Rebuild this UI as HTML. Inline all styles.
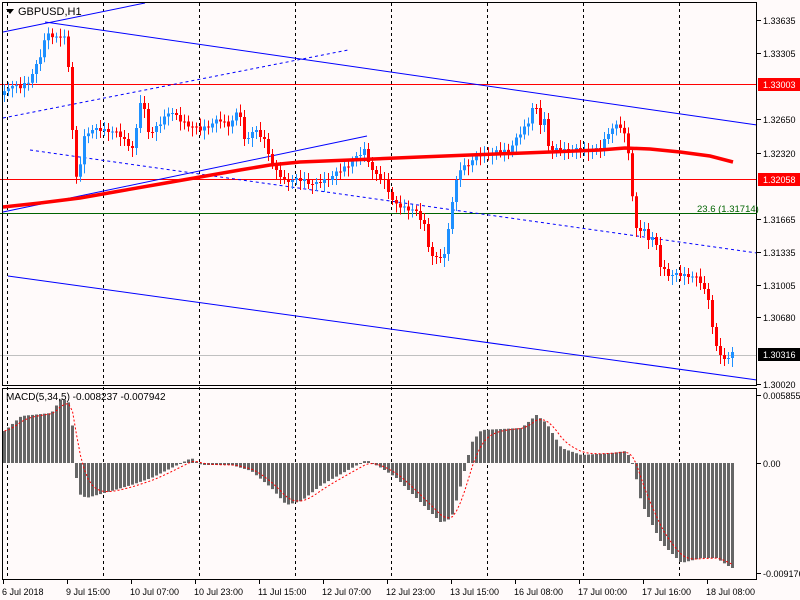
<!DOCTYPE html>
<html><head><meta charset="utf-8"><style>
body{margin:0;background:#fffafa;width:800px;height:600px;overflow:hidden;font-family:"Liberation Sans",sans-serif}
svg{position:absolute;left:0;top:0}
</style></head><body>
<svg id="s" width="800" height="600" xmlns="http://www.w3.org/2000/svg" font-family="Liberation Sans, sans-serif" font-size="10">
<rect width="800" height="600" fill="#fffafa"/>
<g id="grid" stroke="#000" stroke-dasharray="3,3" stroke-width="1"></g>
<line x1="0" y1="84.5" x2="757" y2="84.5" stroke="#f00"/>
<line x1="0" y1="179.5" x2="757" y2="179.5" stroke="#f00"/>
<line x1="0" y1="213.5" x2="757" y2="213.5" stroke="#006400"/>
<line x1="0" y1="355.5" x2="757" y2="355.5" stroke="#c0c0c0"/>
<line x1="3" y1="32" x2="145" y2="3" stroke="#00f"/>
<line x1="45" y1="22" x2="757" y2="125" stroke="#00f"/>
<line x1="3" y1="118" x2="348" y2="50" stroke="#00f" stroke-dasharray="3,3"/>
<line x1="3" y1="212" x2="367" y2="136" stroke="#00f"/>
<line x1="30" y1="150" x2="757" y2="253" stroke="#00f" stroke-dasharray="3,3"/>
<line x1="8" y1="276" x2="757" y2="380" stroke="#00f"/>
<g id="candles"></g>
<polyline points="3,207 40,203 80,198 120,191 160,184 200,177 240,170 270,165 300,162 350,160 420,157 470,155 550,152 600,150 625,148 650,149 680,152 710,156 733,162" fill="none" stroke="#f00" stroke-width="3.5"/>
<g id="macd" fill="#666"></g>
<polyline id="sig" fill="none" stroke="#f00" stroke-dasharray="2,2"/>
<rect x="2.5" y="2.5" width="754" height="383" fill="none" stroke="#000"/>
<rect x="2.5" y="388.5" width="754" height="191" fill="none" stroke="#000"/>
<path d="M6 9 h8 l-4 5z" fill="#000"/>
<text x="18" y="15" font-size="11" fill="#000">GBPUSD,H1</text>
<text x="6" y="400" fill="#000">MACD(5,34,5) -0.008237 -0.007942</text>
<text x="697" y="212" fill="#006400" font-size="9.5">23.6 (1.31714)</text>
<g id="ax" fill="#000" font-size="9"></g>
</svg>
<script>
var NS="http://www.w3.org/2000/svg";
function el(p,t,a){var e=document.createElementNS(NS,t);for(var k in a)e.setAttribute(k,a[k]);p.appendChild(e);return e;}
var g=document.getElementById('grid');
[7,103,199,295,391,487,583,679].forEach(function(x){el(g,'line',{x1:x+.5,y1:3,x2:x+.5,y2:580});});
var kp=[[3,95],[10,85],[20,88],[30,80],[40,60],[48,30],[55,40],[62,35],[68,40],[70,90],[73,130],[76,180],[80,175],[83,140],[90,130],[110,130],[120,135],[135,150],[140,100],[145,110],[150,135],[160,125],[170,110],[180,120],[200,130],[220,120],[230,125],[240,110],[245,140],[255,130],[265,140],[275,170],[285,180],[305,180],[315,185],[335,175],[355,160],[365,150],[375,175],[385,180],[395,205],[415,210],[425,225],[430,250],[435,260],[445,255],[450,220],[455,190],[460,170],[480,155],[510,150],[530,120],[535,100],[540,125],[545,120],[550,150],[600,150],[610,130],[620,125],[628,140],[632,185],[636,230],[645,230],[650,240],[655,235],[660,265],[670,275],[690,275],[700,280],[710,300],[715,345],[725,360],[733,352]];
function yAt(x){for(var i=1;i<kp.length;i++){if(x<=kp[i][0]){var a=kp[i-1],b=kp[i];return a[1]+(b[1]-a[1])*(x-a[0])/(b[0]-a[0]);}}return kp[kp.length-1][1];}
var c=document.getElementById('candles');var prev=yAt(3);
for(var x=3;x<=733;x+=4){var cl=yAt(x+2)+((x*7)%5-2);var op=prev;var up=cl<op;var col=up?'#1e90ff':'#f00';
var t=Math.min(op,cl),b=Math.max(op,cl);if(b-t<1)b=t+1;
el(c,'line',{x1:x+1.5,y1:t-4-(x%5),x2:x+1.5,y2:b+4+(x%6),stroke:col});
el(c,'rect',{x:x,y:t,width:3,height:b-t,fill:col});prev=cl;}
var mk=[[3,-32],[20,-47],[50,-50],[60,-65],[68,-60],[72,-30],[76,30],[85,35],[110,28],[130,22],[150,15],[170,5],[190,-5],[200,2],[230,2],[250,8],[270,25],[285,42],[300,38],[320,22],[345,8],[365,-3],[380,5],[395,15],[420,40],[440,60],[450,55],[460,20],[470,-20],[480,-33],[520,-35],[535,-48],[545,-40],[560,-15],[580,-8],[610,-10],[625,-12],[632,2],[640,40],[660,80],[680,100],[700,95],[715,95],[730,105]];
function mAt(x){for(var i=1;i<mk.length;i++){if(x<=mk[i][0]){var a=mk[i-1],b=mk[i];return a[1]+(b[1]-a[1])*(x-a[0])/(b[0]-a[0]);}}return mk[mk.length-1][1];}
var m=document.getElementById('macd');var pts=[];var s=mAt(3);
for(var x=3;x<=733;x+=4){var v=mAt(x);if(v>=0)el(m,'rect',{x:x,y:463,width:3,height:Math.max(v,1)});else el(m,'rect',{x:x,y:463+v,width:3,height:-v});
s=s+(v-s)*0.35;pts.push((x+1.5)+','+(463+s));}
document.getElementById('sig').setAttribute('points',pts.join(' '));
var ax=document.getElementById('ax');
var lab=[[20,'1.33635'],[53,'1.33305'],[119,'1.32650'],[153,'1.32320'],[219,'1.31665'],[252,'1.31335'],[285,'1.31005'],[317,'1.30680'],[384,'1.30020'],[395,'0.005855'],[463,'0.00'],[573,'-0.009176']];
lab.forEach(function(l){el(ax,'line',{x1:757,y1:l[0]+.5,x2:761,y2:l[0]+.5,stroke:'#000'});var t=el(ax,'text',{x:763,y:l[0]+4});t.textContent=l[1];});
[[84,'1.33003','#f00'],[179,'1.32058','#f00'],[354,'1.30316','#000']].forEach(function(l){el(ax,'rect',{x:758,y:l[0]-6,width:42,height:13,fill:l[2]});var t=el(ax,'text',{x:763,y:l[0]+4,fill:'#fff'});t.textContent=l[1];});
var tk=[3,67,131,195,259,323,387,451,515,579,643,707];
var tl=[[2,'6 Jul 2018'],[66,'9 Jul 15:00'],[130,'10 Jul 07:00'],[194,'10 Jul 23:00'],[258,'11 Jul 15:00'],[322,'12 Jul 07:00'],[386,'12 Jul 23:00'],[450,'13 Jul 15:00'],[514,'16 Jul 08:00'],[578,'17 Jul 00:00'],[642,'17 Jul 16:00'],[706,'18 Jul 08:00']];
tl.forEach(function(l,i){el(ax,'line',{x1:tk[i]+.5,y1:580,x2:tk[i]+.5,y2:584,stroke:'#000'});var t=el(ax,'text',{x:l[0],y:595});t.textContent=l[1];});
</script>
</body></html>
